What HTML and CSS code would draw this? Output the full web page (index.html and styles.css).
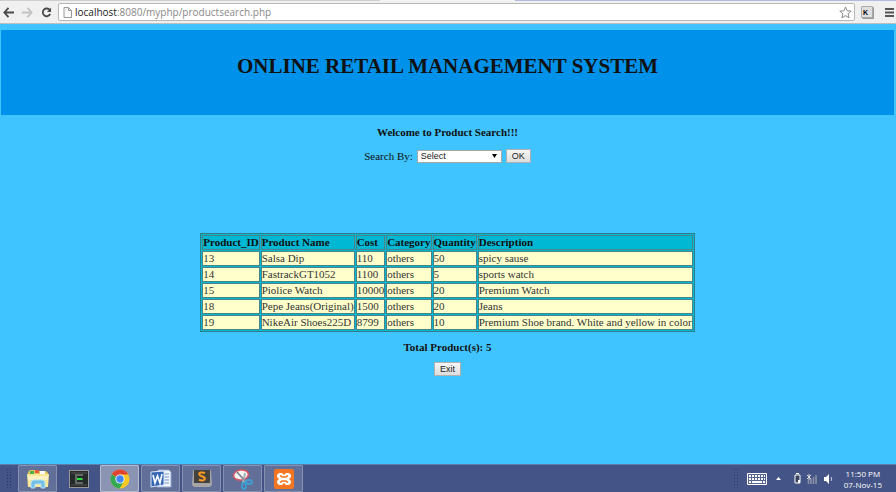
FILE: index.html
```html
<!DOCTYPE html>
<html lang="en">
<head>
    <meta charset="UTF-8">
    <meta name="viewport" content="width=device-width, initial-scale=1.0">
    <title>Product Search</title>
    <link rel="stylesheet" href="styles.css">
</head>
<body>

    <div class="tabstrip"><span class="tab-left"></span><span class="tab-active"></span><span class="tab-rest"></span></div>
    <div class="toolbar">
        <button class="nav" aria-label="Back">
            <svg width="11" height="11" viewBox="0 0 12 12"><path d="M12 6H2M6 1L1.500 6 6 11" fill="none" stroke="#4a4a4a" stroke-width="2"/></svg>
        </button>
        <button class="nav" aria-label="Forward">
            <svg width="11" height="11" viewBox="0 0 12 12"><path d="M0 6h10M6 1l4.500 5L6 11" fill="none" stroke="#c4c4c4" stroke-width="2"/></svg>
        </button>
        <button class="nav" aria-label="Reload">
            <svg width="11" height="11" viewBox="0 0 12 12"><path d="M9.600 3.400A4.200 4.200 0 1 0 10 7.600" fill="none" stroke="#4a4a4a" stroke-width="2"/><path d="M11 .8V5.400H6.400z" fill="#4a4a4a"/></svg>
        </button>
        <div class="address">
            <svg width="9" height="11" viewBox="0 0 9 11"><path d="M1 .5h4.500l3 3v7H1zM5.500 .5v3h3" fill="#fafafa" stroke="#999"/></svg>
            <span class="url"><span class="host">localhost</span>:8080/myphp/productsearch.php</span>
            <svg width="13" height="13" viewBox="0 0 13 13"><path d="M6.500 1l1.600 3.800 4.100.3-3.100 2.700 1 4-3.600-2.200-3.600 2.200 1-4L.8 5.100l4.100-.3z" fill="#fff" stroke="#8a8a8a"/></svg>
        </div>
        <button class="ext" aria-label="Extension">K</button>
        <button class="nav menu" aria-label="Menu">
            <svg width="9" height="9" viewBox="0 0 9 9"><path d="M0 1h9M0 4.500h9M0 8h9" stroke="#555" stroke-width="2"/></svg>
        </button>
    </div>

    <main class="page">
        <div class="header">
            <h1>ONLINE RETAIL MANAGEMENT SYSTEM</h1>
        </div>

        <p class="welcome"><b>Welcome to Product Search!!!</b></p>

        <form class="search">
            <label for="searchBy">Search By:</label>
            <select id="searchBy">
                <option>Select</option>
                <option>Product Name</option>
                <option>Category</option>
            </select>
            <button type="button">OK</button>
        </form>

        <table class="products">
            <tr><th>Product_ID</th><th>Product Name</th><th>Cost</th><th>Category</th><th>Quantity</th><th>Description</th></tr>
            <tr><td>13</td><td>Salsa Dip</td><td>110</td><td>others</td><td>50</td><td>spicy sause</td></tr>
            <tr><td>14</td><td>FastrackGT1052</td><td>1100</td><td>others</td><td>5</td><td>sports watch</td></tr>
            <tr><td>15</td><td>Piolice Watch</td><td>10000</td><td>others</td><td>20</td><td>Premium Watch</td></tr>
            <tr><td>18</td><td>Pepe Jeans(Original)</td><td>1500</td><td>others</td><td>20</td><td>Jeans</td></tr>
            <tr><td>19</td><td>NikeAir Shoes225D</td><td>8799</td><td>others</td><td>10</td><td>Premium Shoe brand. White and yellow in color</td></tr>
        </table>

        <p class="total"><b>Total Product(s): 5</b></p>
        <button type="button">Exit</button>
    </main>

    <div class="taskbar">
        <span class="grip"></span>
        <button class="task" aria-label="File Explorer">
            <svg width="24" height="22" viewBox="0 0 24 22"><path d="M2 4l2-2h6l1 1h9l2 2v13H2z" fill="#e6c65c"/><path d="M4 3h4v3H4z" fill="#4caf50"/><path d="M9 2h4v3H9z" fill="#e55b3c"/><path d="M14 3h5v3h-5z" fill="#fff"/><path d="M1 6h22l-1 13H2z" fill="#fae79a"/><path d="M2 8h20l-.3 4H2.300z" fill="#fdf3c2"/><path d="M5 20v-5q0-3 3-3h8q3 0 3 3v5h-4v-4H9v4z" fill="#73bfe6" stroke="#b5e1f5"/></svg>
        </button>
        <button class="task plain" aria-label="Terminal">
            <svg width="20" height="18" viewBox="0 0 20 18"><path d="M0 0h20v18H0z" fill="#999"/><path d="M1 1h18v16H1z" fill="#252a28"/><path d="M2 3h16M2 15h16" stroke="#555"/><path d="M14 5H7v8h7M8 9h6" fill="none" stroke="#606b65" stroke-width="2"/><path d="M8 9h5" stroke="#20e83c" stroke-width="2"/></svg>
        </button>
        <button class="task active" aria-label="Chrome">
            <svg width="20" height="20" viewBox="0 0 20 20"><circle cx="10" cy="10" r="9.500" fill="#fbc926"/><path d="M10 10L1.800 5.200A9.500 9.500 0 0 1 18.300 5.500H10z" fill="#df4436"/><path d="M1.800 5.200A9.500 9.500 0 0 0 9.500 19.500L14 12.300 10 10z" fill="#34a853"/><circle cx="10" cy="10" r="4.600" fill="#fff"/><circle cx="10" cy="10" r="3.700" fill="#4285f4"/></svg>
        </button>
        <button class="task" aria-label="Word">
            <svg width="22" height="20" viewBox="0 0 22 20"><path d="M8 1h11l2 2v15H7z" fill="#f2f6fc" stroke="#8da9d4"/><path d="M14 5h5M14 8h5M14 11h5M13 14h6" stroke="#7196cf"/><path d="M1 3l13-1v14L1 18z" fill="#3567b3" stroke="#dce8f8"/><path d="M3 6l2 8 2.500-7L10 14l2-9" fill="none" stroke="#fff" stroke-width="1.600"/></svg>
        </button>
        <button class="task" aria-label="Sublime Text">
            <svg width="20" height="19" viewBox="0 0 20 19"><path d="M1 1h18l1 15-2 2H2l-2-2z" fill="#a5a5a5"/><path d="M2 1h16v13H2z" fill="#44423f"/><path d="M13 4.200C10 2.700 7 3.500 7.200 5.300 7.400 7.500 13 7 12.800 9.500 12.600 12 9 12 7 10.700" fill="none" stroke="#ff9b22" stroke-width="2"/></svg>
        </button>
        <button class="task" aria-label="Snipping Tool">
            <svg width="22" height="22" viewBox="0 0 22 22"><ellipse cx="9" cy="7" rx="7.500" ry="5" fill="#f5f5f5" stroke="#d85663" stroke-width="1.600" transform="rotate(-8 9 7)"/><path d="M5 4l9 10M13 5l-2 10" stroke="#aab2bc" stroke-width="2"/><path d="M5 4l9 10" stroke="#555" stroke-width=".7"/><ellipse cx="17" cy="14" rx="3" ry="2" fill="none" stroke="#3f9ed4" stroke-width="1.800"/><ellipse cx="12" cy="18" rx="2" ry="3" fill="none" stroke="#3f9ed4" stroke-width="1.800"/></svg>
        </button>
        <button class="task" aria-label="XAMPP">
            <svg width="20" height="20" viewBox="0 0 20 20"><rect width="20" height="20" rx="2" fill="#f37623"/><path d="M5 4h3l2 2 2-2h3l2 2v2l-2 2 2 2v2l-2 2h-3l-2-2-2 2H5l-2-2v-2l2-2-2-2V6z" fill="#fff"/><path d="M6 7h1l1 1h4l1-1h1M6 13h1l1-1h4l1 1h1" fill="none" stroke="#f37623" stroke-width="1.600"/></svg>
        </button>

        <div class="tray">
            <span class="grip"></span>
            <svg class="keyboard" width="20" height="12" viewBox="0 0 20 12"><path d="M.5 .5h19v11H.5z" fill="#56658f" stroke="#fff"/><path d="M2 3h16M2 6h16" stroke="#fff" stroke-width="2" stroke-dasharray="2 1"/><path d="M2 9h2M5 9h10M16 9h2" stroke="#fff" stroke-width="2"/></svg>
            <svg class="arrow" width="5" height="3" viewBox="0 0 5 3"><path d="M0 3l2.500-3L5 3z" fill="#fff"/></svg>
            <svg class="battery" width="7" height="11" viewBox="0 0 7 11"><path d="M1 2h5v8H1z" fill="#39415e" stroke="#fff"/><path d="M2 .5h3" stroke="#fff"/><path d="M4 7h2v3H4z" fill="#fff"/></svg>
            <svg class="signal" width="10" height="10" viewBox="0 0 10 10"><path d="M1.500 10V6M4 10V5M6.500 10V3M9 10V1" stroke="#8a90a8" stroke-width="1.600"/><path d="M0 1l4 4M4 1L0 5M2 0v6" stroke="#ddd"/></svg>
            <svg class="sound" width="9" height="10" viewBox="0 0 9 10"><path d="M0 3h2l3-3v10L2 7H0z" fill="#fff"/><path d="M7 3q1.500 2 0 4" fill="none" stroke="#ccd2e4"/></svg>
            <div class="clock">11:50 PM<br>07-Nov-15</div>
        </div>
    </div>

</body>
</html>
```
FILE: styles.css
```css
* {
    box-sizing: border-box;
}
body {
    margin: 0;
    min-height: 100vh;
    display: flex;
    flex-direction: column;
    background: #40c4ff;
    color: #111;
    font-family: "Liberation Serif", serif;
    font-size: 11px;
}

/* browser bar */
.tabstrip {
    display: flex;
    height: 1px;
    background: #f4f4f4;
}
.tab-left {
    flex: 380;
    background: #cfcfcf;
}
.tab-active {
    flex: 135;
}
.tab-rest {
    flex: 381;
    background: #b3bbdb;
}
.toolbar {
    display: flex;
    align-items: center;
    height: 23px;
    padding: 1px 2px 1px 0;
    background: #f0f0f0;
    border-bottom: 1px solid #c0bdbb;
}
.nav {
    display: flex;
    width: 19px;
    padding: 0 0 0 3px;
    border: none;
    background: none;
}
.menu {
    justify-content: flex-end;
    width: 21px;
}
.address {
    flex: 1;
    display: flex;
    align-items: center;
    height: 18px;
    margin-left: 1px;
    padding: 0 2px 0 4px;
    background: white;
    border: 1px solid #b8b8b8;
    border-radius: 2px;
}
.url {
    flex: 1;
    margin-left: 3px;
    font-family: "Open Sans", sans-serif;
    font-size: 10px;
    line-height: 16px;
    color: #888;
}
.host {
    color: #222;
}
.toolbar .ext {
    width: 12px;
    height: 12px;
    margin-left: 6px;
    padding: 0 0 0 1px;
    border: 1px solid #aaa;
    border-radius: 1px;
    box-shadow: 1px 1px 0 #999;
    background: #dedede;
    font: bold 7px/9px "Liberation Sans", sans-serif;
    text-align: left;
}

/* page content */
.page {
    flex: 1;
    padding: 6px 2px 0 1px;
    text-align: center;
}
.header {
    height: 85px;
    padding-top: 22px;
    background: #0091ea;
}
h1 {
    margin: 0;
    font-size: 21px;
    line-height: 28px;
}
.welcome {
    margin: 10px 0;
    line-height: 14px;
}
.search {
    display: flex;
    justify-content: center;
    align-items: center;
    gap: 4px;
    height: 14px;
}
.page button {
    height: 14px;
    padding: 0 5px;
    border: 1px solid #b0b0b0;
    background: linear-gradient(#f6f6f6, #dddddd);
    color: #222;
    font: 9px/12px "Liberation Sans", sans-serif;
}
select {
    appearance: none;
    width: 85px;
    height: 13px;
    padding: 0 3px;
    border: 1px solid #a9a9a9;
    border-radius: 0;
    background: white url("data:image/svg+xml,%3Csvg xmlns='http://www.w3.org/2000/svg' width='5' height='4'%3E%3Cpath d='M0 0h5L2.500 4z'/%3E%3C/svg%3E") no-repeat right 4px center;
    color: #222;
    font: 9px/11px "Liberation Sans", sans-serif;
}
.products {
    margin: 70px auto 0;
    border: 1px solid #2e7f8c;
    border-collapse: separate;
    border-spacing: 1px;
    background: #00b8d4;
    text-align: left;
}
.products th,
.products td {
    height: 15px;
    padding: 0;
    border: 1px solid #4a8388;
    line-height: 13px;
    white-space: nowrap;
}
.products td {
    background: #ffffcc;
    color: #333;
}
.total {
    margin: 8px 0;
    line-height: 14px;
}

/* taskbar */
.taskbar {
    display: flex;
    align-items: stretch;
    gap: 2px;
    height: 28px;
    padding-left: 6px;
    background: #445486;
    border-top: 1px solid #5b7eaa;
}
.grip {
    width: 6px;
    margin: 3px 4px 3px 0;
    background: radial-gradient(circle, #2c3864 1px, transparent 1px) 0 0 / 3px 3px;
}
.task {
    display: flex;
    align-items: center;
    justify-content: center;
    width: 39px;
    padding: 0;
    border: 1px solid #8791b0;
    border-radius: 1px;
    background: #626f98;
}
.task.plain {
    border-color: transparent;
    background: none;
}
.task.active {
    border-color: #b5bcd0;
    background: #8b95b3;
}
.tray {
    display: flex;
    align-items: center;
    margin-left: auto;
    padding-right: 14px;
}
.tray .grip {
    align-self: stretch;
    margin-right: 8px;
}
.arrow { margin: 0 13px 0 9px; }
.signal { margin: 0 7px 0 6px; }
.sound { margin-right: 11px; }
.clock {
    color: white;
    font-family: "Open Sans", sans-serif;
    font-size: 8px;
    line-height: 11px;
    text-align: center;
}
```
